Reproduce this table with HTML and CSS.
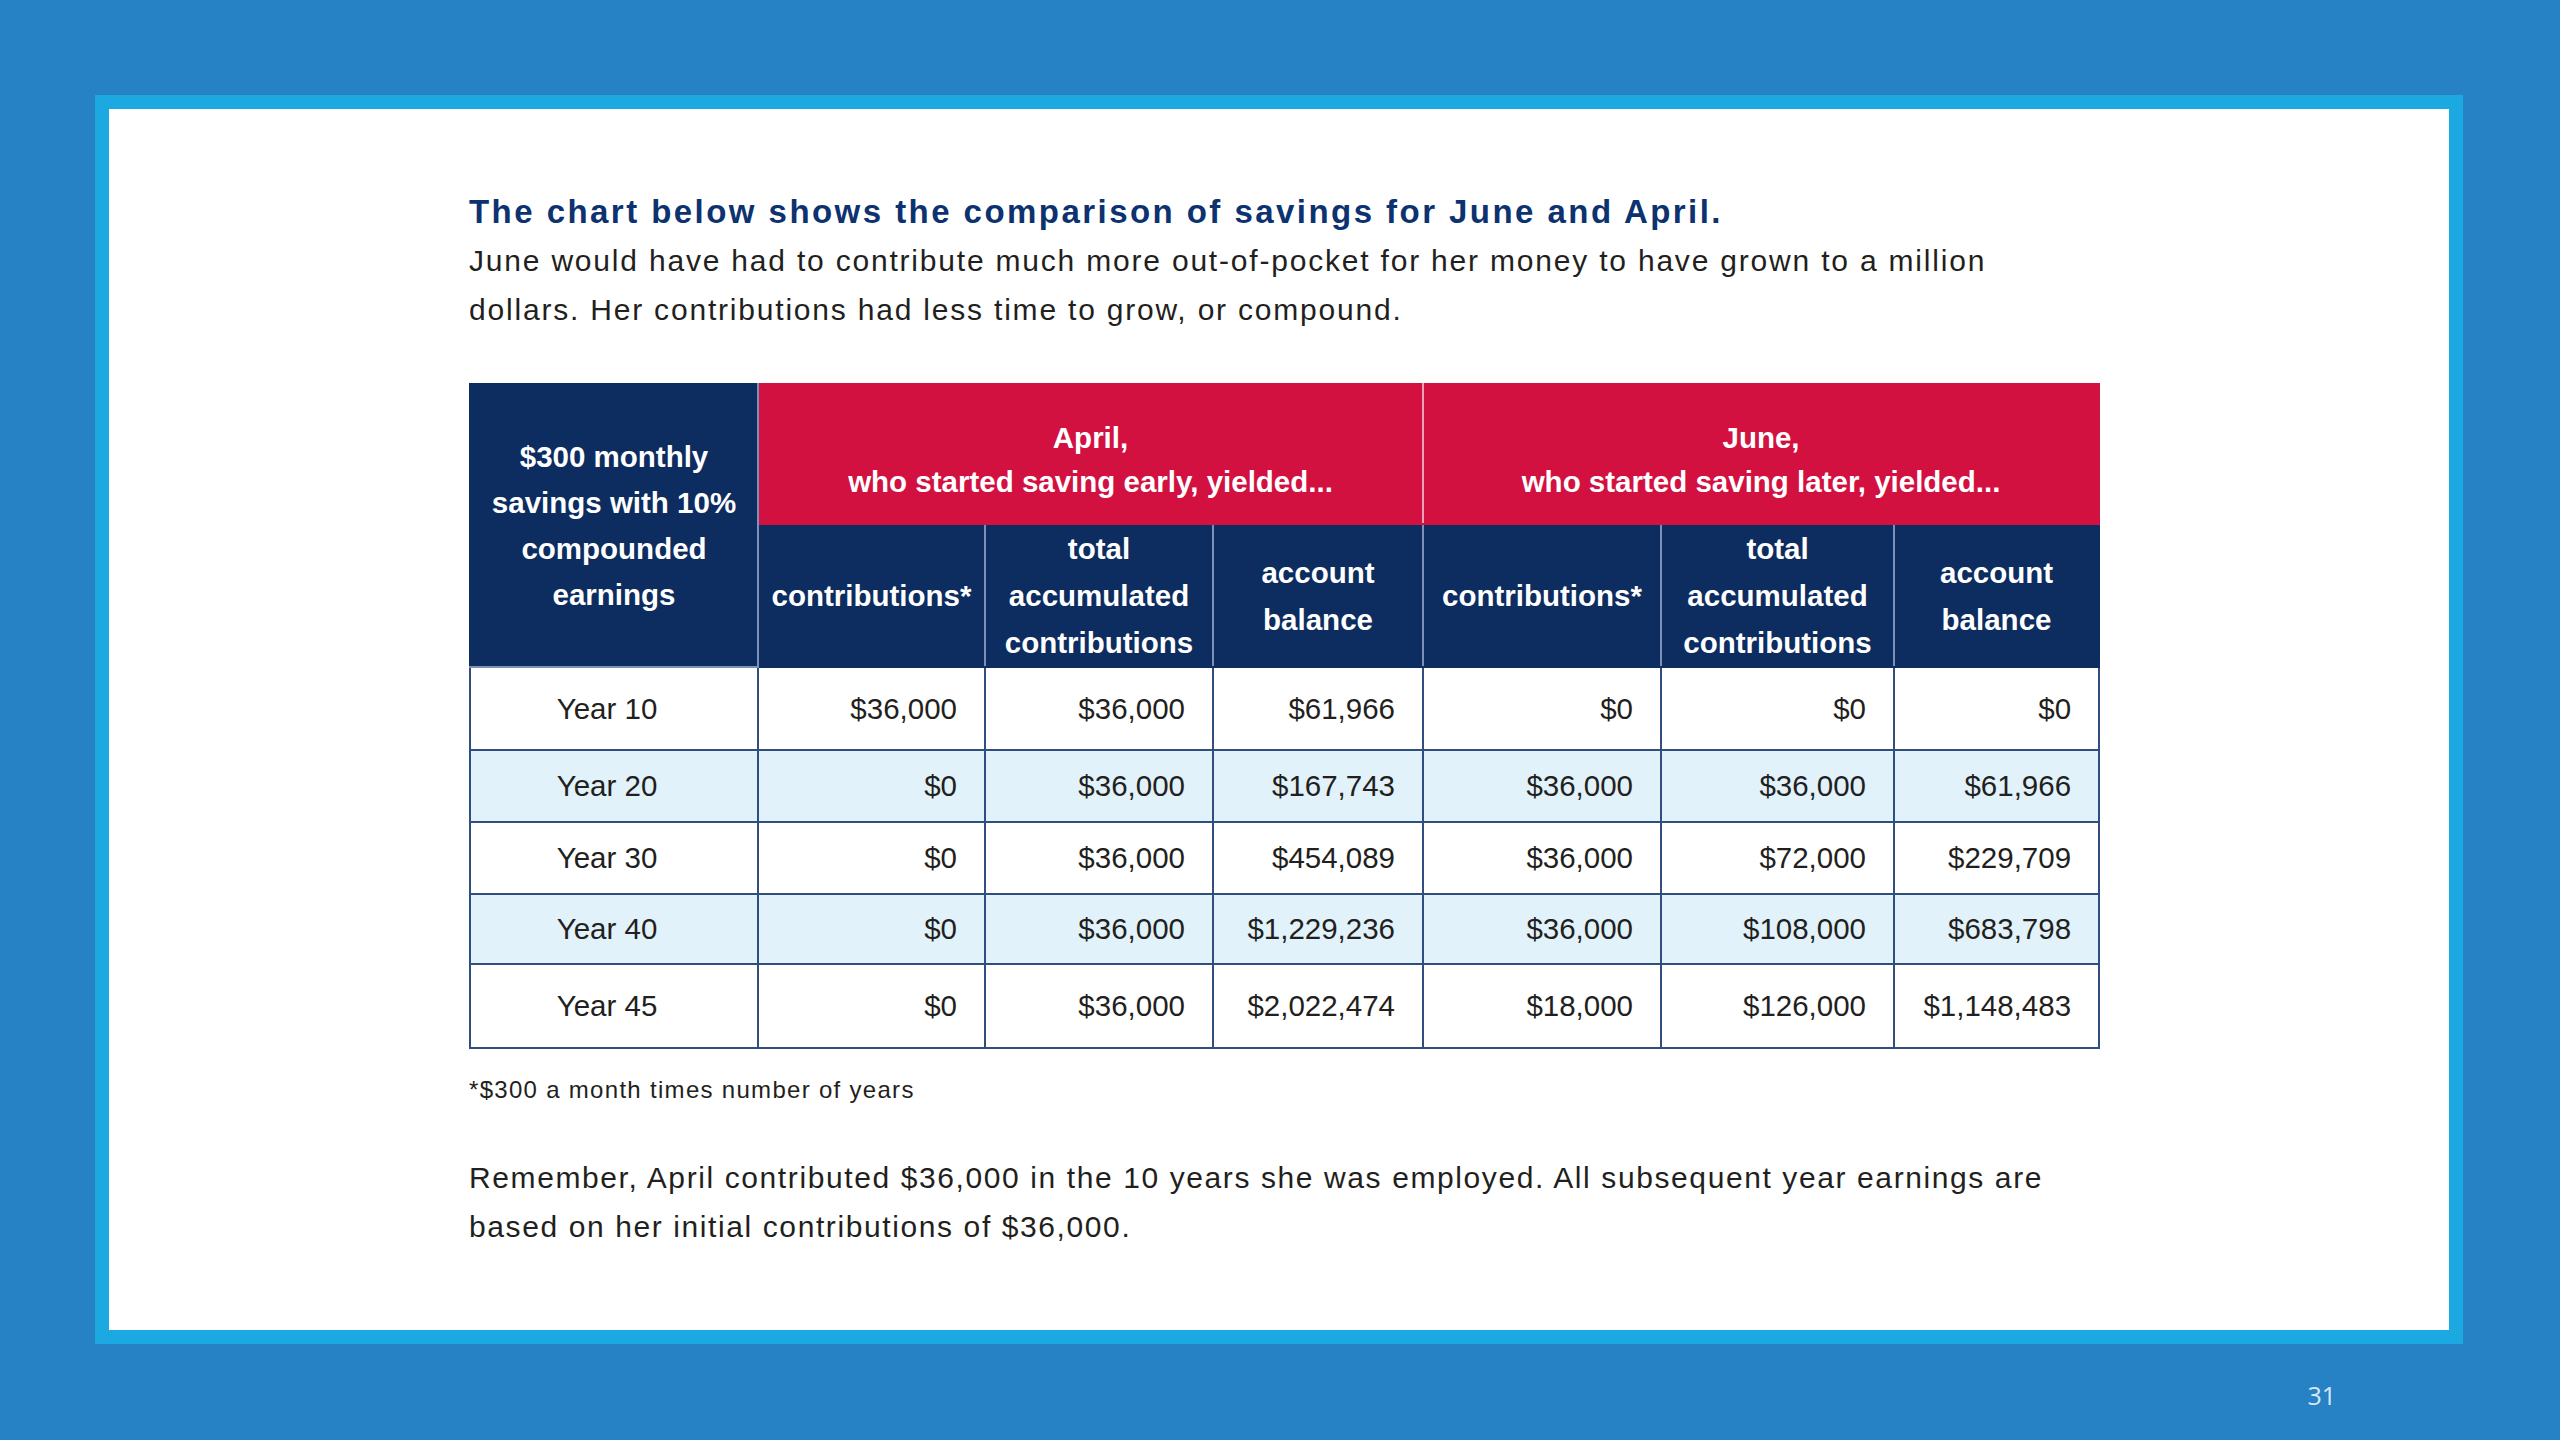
FILE: index.html
```html
<!DOCTYPE html>
<html lang="en">
<head>
<meta charset="utf-8">
<title>Savings comparison</title>
<link rel="stylesheet" href="styles.css">
</head>
<body>
<div class="slide">
  <div class="frame">
    <div class="sheet">
      <h1 class="title">The chart below shows the comparison of savings for June and April.</h1>
      <p class="lead">June would have had to contribute much more out-of-pocket for her money to have grown to a million<br>dollars. Her contributions had less time to grow, or compound.</p>
      <table class="chart">
        <colgroup>
          <col class="w1"><col class="w2"><col class="w3"><col class="w4"><col class="w5"><col class="w6"><col class="w7">
        </colgroup>
        <thead>
          <tr class="h-red">
            <th rowspan="2" class="navy corner">$300 monthly<br>savings with 10%<br>compounded<br>earnings</th>
            <th colspan="3" class="red">April,<br>who started saving early, yielded...</th>
            <th colspan="3" class="red">June,<br>who started saving later, yielded...</th>
          </tr>
          <tr class="h-navy">
            <th class="navy">contributions*</th>
            <th class="navy">total<br>accumulated<br>contributions</th>
            <th class="navy">account<br>balance</th>
            <th class="navy">contributions*</th>
            <th class="navy">total<br>accumulated<br>contributions</th>
            <th class="navy">account<br>balance</th>
          </tr>
        </thead>
        <tbody>
          <tr class="r1"><td class="yr">Year 10</td><td>$36,000</td><td>$36,000</td><td>$61,966</td><td>$0</td><td>$0</td><td>$0</td></tr>
          <tr class="r2 alt"><td class="yr">Year 20</td><td>$0</td><td>$36,000</td><td>$167,743</td><td>$36,000</td><td>$36,000</td><td>$61,966</td></tr>
          <tr class="r3"><td class="yr">Year 30</td><td>$0</td><td>$36,000</td><td>$454,089</td><td>$36,000</td><td>$72,000</td><td>$229,709</td></tr>
          <tr class="r4 alt"><td class="yr">Year 40</td><td>$0</td><td>$36,000</td><td>$1,229,236</td><td>$36,000</td><td>$108,000</td><td>$683,798</td></tr>
          <tr class="r5"><td class="yr">Year 45</td><td>$0</td><td>$36,000</td><td>$2,022,474</td><td>$18,000</td><td>$126,000</td><td>$1,148,483</td></tr>
        </tbody>
      </table>
      <p class="note">*$300 a month times number of years</p>
      <p class="closing">Remember, April contributed $36,000 in the 10 years she was employed. All subsequent year earnings are<br>based on her initial contributions of $36,000.</p>
    </div>
  </div>
  <div class="footer"><span class="pagenum">31</span></div>
</div>
</body>
</html>
```

FILE: styles.css
```css
html, body {
  margin: 0;
  padding: 0;
}

body {
  background: #2781c5;
  width: 2560px;
  height: 1440px;
  overflow: hidden;
  font-family: "Liberation Sans", Arial, sans-serif;
}

.slide {
  padding: 95px 0 0 95px;
}

.frame {
  box-sizing: border-box;
  width: 2368px;
  height: 1249px;
  border: 14px solid #1ca9e1;
  background: #ffffff;
}

.sheet {
  padding: 78px 0 0 360px;
  color: #231f20;
}

.title {
  margin: 0;
  font-size: 33px;
  line-height: 49px;
  font-weight: bold;
  letter-spacing: 2.45px;
  color: #0d3270;
}

.lead {
  margin: 0;
  font-size: 30px;
  line-height: 49px;
  letter-spacing: 1.8px;
}

.chart {
  margin-top: 49px;
  border-collapse: collapse;
  table-layout: fixed;
  width: 1629px;
  font-size: 29.5px;
}

.w1 { width: 288px; }
.w2 { width: 227px; }
.w3 { width: 228px; }
.w4 { width: 210px; }
.w5 { width: 238px; }
.w6 { width: 233px; }
.w7 { width: 205px; }

.chart th {
  color: #ffffff;
  font-weight: bold;
  text-align: center;
  vertical-align: middle;
  padding: 0;
  border: 2px solid #7d90b8;
}

.chart th.navy {
  background: #0d2c5f;
  line-height: 47px;
}

.chart th.corner {
  line-height: 46px;
  border-left-color: #0d2c5f;
  border-top-color: #0d2c5f;
}

.chart th.red {
  background: #d21141;
  line-height: 44px;
  padding-top: 12px;
  border-top-color: #d21141;
  border-right-color: #e9a3b6;
  border-bottom-color: #d21141;
}

.chart th.red:last-child {
  border-right-color: #d21141;
}

.h-navy th:last-child {
  border-right-color: #0d2c5f;
}

.h-navy th {
  border-top-color: #d21141;
  border-bottom-color: #0d2c5f;
}

.h-red { height: 140px; }
.h-navy { height: 143px; }

.chart td {
  border: 2px solid #304f80;
  padding: 0 27px 0 0;
  text-align: right;
  vertical-align: middle;
  color: #231f20;
}

.chart td.yr {
  text-align: center;
  padding: 0 14px 0 0;
}

.chart .alt td {
  background: #e1f2fb;
}

.r1 { height: 83px; }
.r2 { height: 72px; }
.r3 { height: 72px; }
.r4 { height: 70px; }
.r5 { height: 84px; }

.note {
  margin: 21px 0 0 0;
  font-size: 24px;
  line-height: 40px;
  letter-spacing: 1.3px;
}

.closing {
  margin: 43px 0 0 0;
  font-size: 30px;
  line-height: 49px;
  letter-spacing: 1.6px;
}

.footer {
  display: flex;
  justify-content: flex-end;
  width: 2241px;
  padding-top: 36px;
}

.pagenum {
  font-family: "Open Sans", "Liberation Sans", sans-serif;
  font-size: 25px;
  line-height: 30px;
  color: #d6e8f6;
}
```
